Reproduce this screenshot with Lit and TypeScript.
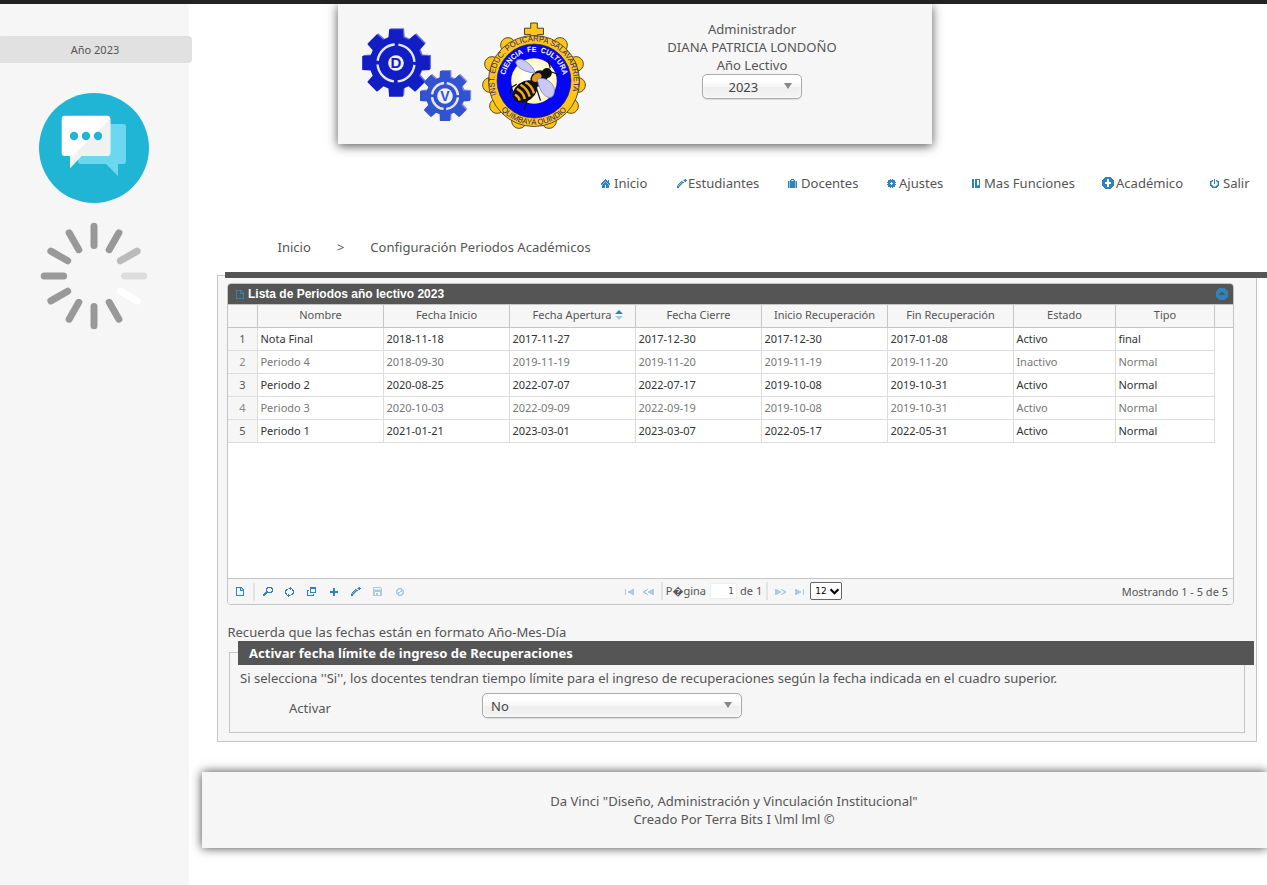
import { LitElement, html, svg, css } from "lit";
import { customElement, property } from "lit/decorators.js";

/* Small 1-bit glyphs: "#" solid, "+" half tone, "." empty. */
const GLYPHS: Record<string, string[]> = {
  home: [
    "....#....",
    "...###.#.",
    "..##+###.",
    ".##+#+##.",
    "##+###+##",
    "#+#####+#",
    ".###.###.",
    ".###.###.",
    ".###.###.",
  ],
  pencil: [
    ".......+#.",
    "......+###",
    "....#+.+#.",
    "...#+##...",
    "..#+#+....",
    ".#+#+.....",
    "++#+......",
    "##+.......",
    "##........",
  ],
  suitcase: [
    "...###...",
    "..#+.+#..",
    "#+#####+#",
    "#+#####+#",
    "#+#####+#",
    "#+#####+#",
    "#+#####+#",
    "#+#####+#",
    "#+#####+#",
  ],
  gear: [
    "...#.#...",
    ".#######.",
    ".#######.",
    "####.####",
    ".##...##.",
    "####.####",
    ".#######.",
    ".#######.",
    "...#.#...",
  ],
  book: [
    "##.#####",
    "##.##..#",
    "##.##..#",
    "##.##..#",
    "##.##..#",
    "##.##..#",
    "##.##+##",
    "##.#####",
    "##.#####",
  ],
  plusCircle: [
    "...######...",
    "..########..",
    ".####..####.",
    "#####..#####",
    "#####..#####",
    "###......###",
    "###......###",
    "#####..#####",
    "#####..#####",
    ".####..####.",
    "..########..",
    "...######...",
  ],
  power: [
    "....#....",
    ".+#.#.#+.",
    "##+.#.+##",
    "#+..#..+#",
    "#+..#..+#",
    "#+.....+#",
    "##+...+##",
    ".##+++##.",
    "..#####..",
  ],
  document: [
    "######..",
    "#...#+#.",
    "#...#.+#",
    "#...####",
    "#......#",
    "#......#",
    "#......#",
    "#......#",
    "########",
  ],
  search: [
    "....#####.",
    "...##...##",
    "...#.....#",
    "...#.....#",
    "...##...##",
    "..#######.",
    ".###......",
    "###.......",
    "##........",
  ],
  refresh: [
    ".....#...",
    "...+###..",
    ".##..#.#.",
    "##.....##",
    "#.......#",
    "#.......#",
    "##.....##",
    ".#.#..##.",
    "..###+...",
    "...#.....",
  ],
  copy: [
    "...######",
    "...######",
    "...#....#",
    "##.#....#",
    "#..#....#",
    "#..######",
    "#........",
    "#.....#..",
    "#######..",
  ],
  plus: [
    "...##...",
    "...##...",
    "...##...",
    "########",
    "########",
    "...##...",
    "...##...",
    "...##...",
  ],
  disk: [
    "########.",
    "#.......#",
    "#+++++++#",
    "#########",
    "#########",
    "##.....##",
    "##.##..##",
    "##.##..##",
    "#########",
  ],
  cancel: [
    "..####..",
    ".##++##.",
    "##...###",
    "#+..##+#",
    "#+##..+#",
    "###...##",
    ".##++##.",
    "..####..",
  ],
  first: [
    "#......##",
    "#....####",
    "#..######",
    "#..######",
    "#....####",
    "#......##",
  ],
  prev: [
    "...+#....##",
    ".+##...####",
    "##+..######",
    "##+..######",
    ".+##...####",
    "...+#....##",
  ],
  next: [
    "##....#+...",
    "####...##+.",
    "######..+##",
    "######..+##",
    "####...##+.",
    "##....#+...",
  ],
  last: [
    "##......#",
    "####....#",
    "######..#",
    "######..#",
    "####....#",
    "##......#",
  ],
  collapse: [
    "...######...",
    "..########..",
    ".##########.",
    "############",
    "#####..#####",
    "####....####",
    "###......###",
    "############",
    "############",
    ".##########.",
    "..########..",
    "...######...",
  ],
};

const cells = (rows: string[], mark: string) =>
  rows
    .flatMap((row, y) =>
      [...row].map((c, x) => (c === mark ? `M${x} ${y}h1v1h-1z` : ""))
    )
    .join("");

@customElement("pixel-icon")
export class PixelIcon extends LitElement {
  @property() name = "";
  static styles = css`
    :host { display: inline-flex; color: #2e83bd; }
    svg { display: block; fill: currentColor; }
    .half { opacity: 0.5; }
  `;
  render() {
    const rows = GLYPHS[this.name] ?? [];
    const w = rows[0]?.length ?? 0;
    return html`<svg width=${w} height=${rows.length} viewBox="0 0 ${w} ${rows.length}" shape-rendering="crispEdges">
      <path d=${cells(rows, "#")}></path>
      <path class="half" d=${cells(rows, "+")}></path>
    </svg>`;
  }
}

/* Outline of an eight-toothed cog centred on the origin. */
const cog = (outer: number, inner: number) => {
  const pts: string[] = [];
  for (let i = 0; i < 8; i++) {
    const steps: [number, number][] = [[-16.5, inner], [-11.5, outer], [11.5, outer], [16.5, inner]];
    for (const [deg, r] of steps) {
      const a = ((i * 45 + deg) * Math.PI) / 180;
      pts.push(`${(r * Math.sin(a)).toFixed(2)},${(-r * Math.cos(a)).toFixed(2)}`);
    }
  }
  return pts.join(" ");
};

const gearMark = (cx: number, cy: number, outer: number, inner: number, ring: number, fill: string, edge: string, letter: string, size: number) => svg`
  <g transform="translate(${cx} ${cy})">
    <polygon points=${cog(outer, inner)} fill=${edge} transform="translate(1.2 -1)"></polygon>
    <polygon points=${cog(outer, inner)} fill=${fill}></polygon>
    <circle r=${ring} fill="none" stroke="#e6e6fa" stroke-width="2.4"
      stroke-dasharray="${ring * 1.36} ${ring * 0.2108}" stroke-dashoffset=${-ring * 0.1054}></circle>
    <circle r="7.8" fill="#f0f0ff"></circle>
    <text class="letter" y=${size * 0.36} font-size=${size} fill=${fill}>${letter}</text>
  </g>`;

@customElement("brand-marks")
export class BrandMarks extends LitElement {
  static styles = css`
    :host { display: block; }
    svg { display: block; }
    text { font-family: "Liberation Sans", Arial, sans-serif; }
    .letter { font-weight: bold; text-anchor: middle; }
    .motto { font-weight: bold; font-size: 7.6px; fill: #fff; }
    .ring { font-size: 8px; fill: #2a2470; }
  `;
  render() {
    const bumps = [[-26, -36], [26, -36], [-42, -17], [42, -17], [-44, 4], [44, 4], [-37, 25], [37, 25], [-15, 40], [15, 40]];
    return html`<svg width="230" height="112" viewBox="360 20 230 112">
      <defs>
        <radialGradient id="glow"><stop offset=".5" stop-color="#fff"></stop><stop offset="1" stop-color="#fbf6b0"></stop></radialGradient>
        <path id="arcTop" d="M -37 14.500 A 39.700 39.700 0 1 1 37 14.500"></path>
        <path id="arcMotto" d="M -29.200 -4 A 29.500 29.500 0 0 1 29.200 -4"></path>
        <path id="arcLow" d="M -36 25 A 43.800 43.800 0 0 0 36 25"></path>
      </defs>
      ${gearMark(396, 63, 34.5, 26.5, 18.5, "#101ec4", "#6f6ce0", "D", 15)}
      ${gearMark(445, 96, 25.5, 19, 13, "#3153cf", "#8f8cdc", "V", 14)}
      <g transform="translate(534 81)">
        ${bumps.map(([x, y]) => svg`<circle cx=${x} cy=${y} r="7.4" fill="#fdc51c" stroke="#4b4220" stroke-width=".9"></circle>`)}
        <path d="M-3.300 -58h6.600v5.200h6.200v6.400h-6.200v10h-6.600v-10h-6.200v-6.400h6.200z" fill="#fdc51c" stroke="#4b4220" stroke-width="1"></path>
        <circle r="45.500" fill="#fdc51c" stroke="#4b4220" stroke-width=".9"></circle>
        <circle r="37" fill="#0606f6" stroke="#222" stroke-width=".6"></circle>
        <circle r="22.800" fill="url(#glow)"></circle>
        <text class="ring" textLength="148" lengthAdjust="spacingAndGlyphs"><textPath href="#arcTop" startOffset="1">INST. EDUC. POLICARPA SALAVARRIETA</textPath></text>
        <text class="motto" textLength="80" lengthAdjust="spacingAndGlyphs"><textPath href="#arcMotto" startOffset="2">CIENCIA&#160; FE&#160; CULTURA</textPath></text>
        <text class="ring" textLength="74" lengthAdjust="spacingAndGlyphs"><textPath href="#arcLow" startOffset="5">QUIMBAYA QUINDIO</textPath></text>
        <g transform="scale(1.08)">
          <g stroke="#0b0b0b" fill="none" stroke-width="1.100">
            <path d="M14 -9l9 3M15 -12l-2 -8M8 1l6 6M2 6l4 12M-6 17l-3 9M-16 3l-5 3 -1 6M-1 -8l-8 -4"></path>
          </g>
          <g transform="rotate(-38)">
            <ellipse cx="-12.500" cy="2.500" rx="12.500" ry="9" fill="#111"></ellipse>
            <path d="M-7 -4q3 6 0 13M-12 -5q3 7 0 14M-17 -4q3 6 0 12M-21.500 -1q1.500 4 0 7" stroke="#f5a818" stroke-width="2.300" fill="none"></path>
            <ellipse cx="5" cy="1" rx="8.500" ry="7" fill="#111"></ellipse>
            <ellipse cx="4" cy="-1" rx="5" ry="3.500" fill="#e59b16"></ellipse>
            <ellipse cx="14" cy="1.500" rx="4.600" ry="4.600" fill="#111"></ellipse>
          </g>
          <path d="M1 -7C-4 -8 -15 -10 -17 -17C-16 -22 -9 -20 -6 -17C-2 -14 0 -11 1 -7z" fill="#c9c9f3" stroke="#7878b5" stroke-width=".700"></path>
          <path d="M3 -2C10 -4 18 1 19 8C19 13 17 16 13 15C7 13 4 5 3 -2z" fill="#c9c9f3" stroke="#7878b5" stroke-width=".700"></path>
        </g>
      </g>
    </svg>`;
  }
}

@customElement("side-panel")
export class SidePanel extends LitElement {
  static styles = css`
    :host { display: flex; flex-direction: column; width: 189px; background: #f6f6f6; padding-top: 32px; box-sizing: border-box; }
    .year { width: 194px; height: 27px; line-height: 27px; margin-left: -2px; padding-right: 0; box-sizing: border-box; border-radius: 4px; background: #e1e1e1; text-align: center; font-size: 11px; color: #555; }
    .chat { display: block; margin: 30px 0 0 39px; }
    .spinner { display: block; margin: 18px 0 0 39px; }
  `;
  render() {
    const tones = ["#999", "#999", "#bbb", "#ddd", "#fff", "#999", "#999", "#999", "#999", "#999", "#999", "#999"];
    return html`
      <div class="year">Año 2023</div>
      <svg class="chat" width="110" height="110" viewBox="0 0 110 110">
        <circle cx="55" cy="55" r="55" fill="#20b5d5"></circle>
        <path d="M42 31h42a3 3 0 0 1 3 3v34a3 3 0 0 1 -3 3h-5v12l-12 -12h-25a3 3 0 0 1 -3 -3v-34a3 3 0 0 1 3 -3z" fill="#6bd8f0"></path>
        <path d="M26 22.700h42a3.300 3.300 0 0 1 3.300 3.300v33.700a3.300 3.300 0 0 1 -3.300 3.300h-25.500l-11.500 12v-12h-5a3.300 3.300 0 0 1 -3.300 -3.300v-33.700a3.300 3.300 0 0 1 3.300 -3.300z" fill="#fff"></path>
        <path d="M71.300 25.500v34.200a3.300 3.300 0 0 1 -3.300 3.300h-25.500l-11.500 12v-9z" fill="#f0f2f2"></path>
        <circle cx="35" cy="43" r="4.200" fill="#20b5d5"></circle>
        <circle cx="47" cy="43" r="4.200" fill="#20b5d5"></circle>
        <circle cx="59" cy="43" r="4.200" fill="#20b5d5"></circle>
      </svg>
      <svg class="spinner" width="110" height="110" viewBox="-55 -55 110 110">
        ${tones.map((t, i) => svg`<line y1="-49.800" y2="-30.400" stroke=${t} stroke-width="7" stroke-linecap="round" transform="rotate(${i * 30})"></line>`)}
      </svg>`;
  }
}

@customElement("drop-box")
export class DropBox extends LitElement {
  @property() value = "";
  static styles = css`
    :host { display: flex; align-items: center; justify-content: space-between; box-sizing: border-box; height: 25px; padding: 0 9px 0 8px; border: 1px solid #aaa; border-radius: 5px; color: #444; font-size: 13px; text-align: left;
      background: linear-gradient(#fff 20%, #f6f6f6 50%, #eee 52%, #f4f4f4 100%) padding-box; box-shadow: 0 0 3px #fff inset, 0 1px 1px rgba(0, 0, 0, 0.1); }
    .text { flex: 1; line-height: 18px; padding-top: 1px; }
    .arrow { border: 4px solid transparent; border-top: 6px solid #888; border-bottom: 0; margin-bottom: 1px; }
  `;
  render() {
    return html`<span class="text">${this.value}</span><span class="arrow"></span>`;
  }
}

const COLUMNS = ["", "Nombre", "Fecha Inicio", "Fecha Apertura", "Fecha Cierre", "Inicio Recuperación", "Fin Recuperación", "Estado", "Tipo", ""];
const ROWS = [
  ["Nota Final", "2018-11-18", "2017-11-27", "2017-12-30", "2017-12-30", "2017-01-08", "Activo", "final"],
  ["Periodo 4", "2018-09-30", "2019-11-19", "2019-11-20", "2019-11-19", "2019-11-20", "Inactivo", "Normal"],
  ["Periodo 2", "2020-08-25", "2022-07-07", "2022-07-17", "2019-10-08", "2019-10-31", "Activo", "Normal"],
  ["Periodo 3", "2020-10-03", "2022-09-09", "2022-09-19", "2019-10-08", "2019-10-31", "Activo", "Normal"],
  ["Periodo 1", "2021-01-21", "2023-03-01", "2023-03-07", "2022-05-17", "2022-05-31", "Activo", "Normal"],
];

@customElement("period-grid")
export class PeriodGrid extends LitElement {
  static styles = css`
    :host { display: flex; flex-direction: column; width: 1007px; height: 322px; box-sizing: border-box; border: 1px solid #c5c5c5; border-radius: 4px; overflow: hidden; background: #fff; font-size: 11px; color: #555; }
    .title { display: flex; align-items: center; height: 20px; background: #555; color: #fff; font: bold 12px "Liberation Sans", Arial, sans-serif; padding: 0 5px 0 8px; }
    .title span { flex: 1; padding-left: 4px; }
    .line { display: grid; grid-template-columns: 30px repeat(6, 126px) 102px 99px 1fr; }
    .head { height: 24px; box-sizing: border-box; background: #f6f6f6; border-top: 1px solid #c5c5c5; border-bottom: 1px solid #c5c5c5; text-align: center; line-height: 20px; }
    .head > div { border-right: 1px solid #c5c5c5; display: flex; justify-content: center; white-space: nowrap; }
    .head > div:last-child { border: 0; }
    .head > .sorted { padding-left: 11px; }
    .sort { display: flex; flex-direction: column; gap: 2px; margin: 5px 0 0 4px; }
    .sort i { border: 4px solid transparent; }
    .sort i:first-child { border-top: 0; border-bottom: 4px solid #2e83bd; }
    .sort i:last-child { border-bottom: 0; border-top: 4px solid #a8cbe2; }
    .row { height: 23px; line-height: 22px; color: #333; }
    .row > div { border-right: 1px solid #ddd; border-bottom: 1px solid #ddd; padding-left: 2.4px; white-space: nowrap; }
    .row > .num { background: #f6f6f6; color: #555; text-align: center; padding: 0; }
    .alt { color: #777; }
    .row.alt > .num { color: #888; }
    .pager { display: grid; grid-template-columns: 1fr auto 1fr; align-items: center; margin-top: auto; height: 26px; box-sizing: border-box; border-top: 1px solid #c5c5c5; background: #f6f6f6; }
    .tools { display: grid; grid-template-columns: 24px 4px repeat(7, 22px); align-items: center; justify-items: center; }
    .tools pixel-icon:nth-child(n + 3) { margin-left: 1px; }
    .sep { width: 2px; height: 18px; background: #e4e4e4; }
    .nav { display: flex; align-items: center; padding-left: 6px; }
    .nav .gap { margin-left: 9px; }
    .nav .near { margin-left: 7px; }
    .nav .tight { margin-left: 4px; }
    .label { padding-left: 3px; line-height: 18px; margin-top: -2px; }
    .page { width: 27px; height: 16px; box-sizing: border-box; border: 1px solid #eee; background: #fff; margin: -1px 0 0 4px; text-align: right; padding-right: 2px; font: 9px/15px "DejaVu Sans", sans-serif; }
    .nav .sep, .size { margin-top: -1px; }
    .size { display: flex; align-items: center; width: 32px; height: 18px; box-sizing: border-box; border: 1px solid #666; border-radius: 2px; background: #fff; color: #000; font: 9px "DejaVu Sans", sans-serif; padding-left: 4px; margin-left: 6px; gap: 2px; }
    .off { opacity: 0.37; }
    .info { text-align: right; padding-right: 5px; }
  `;
  render() {
    return html`
      <div class="title"><pixel-icon name="document"></pixel-icon><span>Lista de Periodos año lectivo 2023</span><pixel-icon name="collapse"></pixel-icon></div>
      <div class="line head">
        ${COLUMNS.map((c, i) => html`<div class=${i === 3 ? "sorted" : ""}>${c}${i === 3 ? html`<span class="sort"><i></i><i></i></span>` : ""}</div>`)}
      </div>
      ${ROWS.map((r, i) => html`<div class="line row ${i % 2 ? "alt" : ""}"><div class="num">${i + 1}</div>${r.map((v) => html`<div>${v}</div>`)}</div>`)}
      <div class="pager">
        <div class="tools">
          <pixel-icon name="document"></pixel-icon><span class="sep"></span>
          <pixel-icon name="search"></pixel-icon><pixel-icon name="refresh"></pixel-icon><pixel-icon name="copy"></pixel-icon>
          <pixel-icon name="plus"></pixel-icon><pixel-icon name="pencil"></pixel-icon>
          <pixel-icon class="off" name="disk"></pixel-icon><pixel-icon class="off" name="cancel"></pixel-icon>
        </div>
        <div class="nav">
          <pixel-icon class="off" name="first"></pixel-icon><pixel-icon class="off gap" name="prev"></pixel-icon>
          <span class="sep near"></span><span class="label">P&#xFFFD;gina</span><span class="page">1</span><span class="label">de 1</span>
          <span class="sep tight"></span><pixel-icon class="off near" name="next"></pixel-icon><pixel-icon class="off gap" name="last"></pixel-icon>
          <span class="size">12<svg width="11" height="7" viewBox="0 0 11 7"><path d="M1.500 1.200l4 4 4 -4" fill="none" stroke="#000" stroke-width="2.200"></path></svg></span>
        </div>
        <div class="info">Mostrando 1 - 5 de 5</div>
      </div>`;
  }
}

@customElement("app-root")
export class AppRoot extends LitElement {
  static styles = css`
    :host { display: flex; flex-direction: column; height: 885px; width: 1267px; overflow: hidden; background: #fff; color: #555; font: 13.06px/18px "Noto Sans", sans-serif; }
    .top { flex: none; height: 4px; background: #222; z-index: 1; }
    .body { flex: 1; display: flex; }
    main { flex: 1; min-width: 0; }
    header { display: flex; width: 594px; height: 140px; box-sizing: border-box; margin-left: 149px; padding: 16px 0 0 22px; background: #f6f6f6; box-shadow: 0 2px 10px #555; }
    .user { display: flex; flex-direction: column; align-items: center; width: 324px; text-align: center; }
    .yearbox { width: 100px; padding-left: 26px; margin-right: 1px; }
    nav { display: grid; grid-template-columns: 76px 111px 99px 85px 130px 108px 50px; margin: 30px 0 0 412px; height: 18px; }
    .item { display: flex; align-items: center; white-space: nowrap; }
    .slot { flex: none; display: flex; }
    .crumbs { display: flex; margin: 46px 0 0 88.5px; gap: 26px; height: 18px; }
    .panel { width: 1040px; height: 467px; box-sizing: border-box; border: 1px solid #c5c5c5; background: #f6f6f6; margin: 19px 0 0 28px; }
    .bar { height: 6px; background: #555; margin: -4px -11px 0 7px; }
    .panel period-grid { margin: 5px 0 0 9px; }
    .note { margin: 18px 0 0 9.4px; height: 18px; }
    .inner { margin: 11px 11px 0 11px; border: 1px solid #c5c5c5; height: 81px; box-sizing: border-box; }
    .legend { height: 24px; line-height: 24px; margin: -12px -10px 0 8px; padding-left: 11px; background: #555; color: #fff; font-weight: bold; }
    .hint { padding: 4px 0 0 10px; line-height: 18px; white-space: nowrap; }
    .field { display: flex; align-items: flex-start; padding: 6px 0 0 59px; }
    .field label { width: 193px; padding-top: 6px; }
    .field drop-box { width: 260px; }
    footer { margin: 30px 0 0 13px; height: 76px; padding: 20px 1px 0 0; box-sizing: border-box; background: #f6f6f6; box-shadow: 0 0 10px #444; text-align: center; }
  `;
  render() {
    const nav: [string, string, number][] = [
      ["home", "Inicio", 13], ["pencil", "Estudiantes", 11], ["suitcase", "Docentes", 13], ["gear", "Ajustes", 12],
      ["book", "Mas Funciones", 12], ["plusCircle", "Académico", 14], ["power", "Salir", 13],
    ];
    return html`
      <div class="top"></div>
      <div class="body">
        <side-panel></side-panel>
        <main>
          <header>
            <brand-marks></brand-marks>
            <div class="user"><div>Administrador</div><div>DIANA PATRICIA LONDOÑO</div><div>Año Lectivo</div>
              <drop-box class="yearbox" value="2023"></drop-box></div>
          </header>
          <nav>${nav.map(([icon, text, w]) => html`<div class="item"><span class="slot" style="width:${w}px"><pixel-icon name=${icon}></pixel-icon></span>${text}</div>`)}</nav>
          <div class="crumbs"><span>Inicio</span><span>&gt;</span><span>Configuración Periodos Académicos</span></div>
          <section class="panel">
            <div class="bar"></div>
            <period-grid></period-grid>
            <div class="note">Recuerda que las fechas están en formato Año-Mes-Día</div>
            <div class="inner">
              <div class="legend">Activar fecha límite de ingreso de Recuperaciones</div>
              <div class="hint">Si selecciona ''Si'', los docentes tendran tiempo límite para el ingreso de recuperaciones según la fecha indicada en el cuadro superior.</div>
              <div class="field"><label>Activar</label><drop-box value="No"></drop-box></div>
            </div>
          </section>
          <footer><div>Da Vinci "Diseño, Administración y Vinculación Institucional"</div><div>Creado Por Terra Bits I \\lml lml ©</div></footer>
        </main>
      </div>`;
  }
}
